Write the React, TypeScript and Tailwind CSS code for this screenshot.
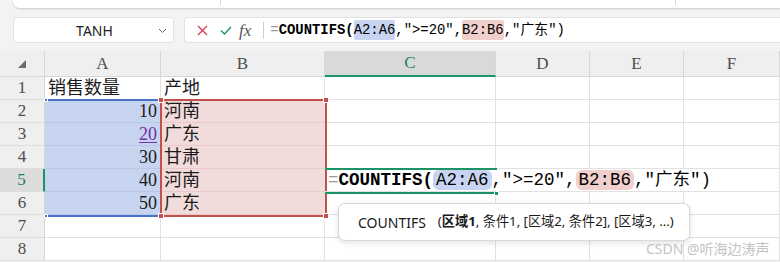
import React from 'react';

const cols = [
    { key: 'A', w: 'w-[116px]' },
    { key: 'B', w: 'w-[164px]' },
    { key: 'C', w: 'w-[171px]' },
    { key: 'D', w: 'w-[94px]' },
    { key: 'E', w: 'w-[94px]' },
    { key: 'F', w: 'w-[96px]' },
];

const rows: Record<number, { a?: string; b?: string }> = {
    1: { a: '销售数量', b: '产地' },
    2: { a: '10', b: '河南' },
    3: { a: '20', b: '广东' },
    4: { a: '30', b: '甘肃' },
    5: { a: '40', b: '河南' },
    6: { a: '50', b: '广东' },
    7: {},
    8: {},
};

const serif = "font-['Liberation_Serif','Noto_Sans_CJK_SC',serif]";
const mono = "font-['Liberation_Mono','Noto_Sans_CJK_SC',monospace]";

function Formula({ big }: { big?: boolean }) {
    const hl = big ? 'px-[3px] rounded-md' : 'py-[2px] rounded-[2px]';
    return (
        <span className={`${mono} whitespace-nowrap text-black`}>
            <span className="text-[#9a9a9a]">=</span>
            <span className="font-bold">COUNTIFS(</span>
            <span className={`bg-[#c8d4f1] ${hl}`}>A2:A6</span>
            ,"&gt;=20",
            <span className={`bg-[#f0cfcd] ${hl}`}>B2:B6</span>
            ,"广东")
        </span>
    );
}

function Cell({ col, row }: { col: string; row: number }) {
    const r = rows[row];
    const base = 'h-[23px] border-b border-[#e1e1e1] flex items-center';
    if (col === 'A') {
        const inRange = row >= 2 && row <= 6;
        return (
            <div className={`${base} border-r ${inRange ? 'bg-[#c7d4f0] border-b-[#b9c7e6] justify-end pr-[3px]' : 'pl-[3px]'}`}>
                {r.a && (
                    <span className={`${serif} text-[18px] leading-none ${row === 3 ? 'text-[#7030a0] underline underline-offset-2' : 'text-[#1a1a1a]'}`}>
                        {r.a}
                    </span>
                )}
            </div>
        );
    }
    if (col === 'B') {
        const inRange = row >= 2 && row <= 6;
        return (
            <div className={`${base} border-r pl-[3px] ${inRange ? 'bg-[#f2dcdb] border-b-[#e8caca]' : ''}`}>
                {r.b && <span className={`${serif} text-[18px] leading-none text-[#1a1a1a]`}>{r.b}</span>}
            </div>
        );
    }
    if (row === 5) {
        if (col === 'C') {
            return (
                <div className={`${base} relative z-10 pl-[3px] text-[17.5px]`}>
                    <Formula big />
                </div>
            );
        }
        if (col === 'D' || col === 'E') return <div className={base} />;
    }
    return <div className={`${base} border-r`} />;
}

export default function App() {
    return (
        <div className="w-[780px] h-[262px] overflow-hidden bg-[#f3f3f3] flex flex-col">
            {/* ribbon edge */}
            <div className="ml-[13px] h-[8px] bg-white rounded-bl-md shadow-[0_1px_2px_rgba(0,0,0,0.18)] flex">
                <div className="w-[208px] border-r border-[#d8d8d8] h-[5px]" />
                <div className="w-[455px] border-r border-[#d8d8d8] h-[5px]" />
            </div>

            {/* name box + formula bar */}
            <div className="mt-[9px] flex gap-[10px] pl-[13px] h-[26px]">
                <div className="w-[161px] bg-white rounded-[4px] border border-[#e2e2e2] flex items-center relative">
                    <span className="flex-1 text-center font-['Noto_Sans',sans-serif] text-[14px] text-[#222] pl-[2px]">TANH</span>
                    <svg className="absolute right-[6px] top-[10px]" width="9" height="6" viewBox="0 0 9 6">
                        <path d="M1 1l3.5 3.5L8 1" stroke="#666" strokeWidth="1" fill="none" />
                    </svg>
                </div>
                <div className="flex-1 bg-white rounded-l-[4px] border border-r-0 border-[#e2e2e2] flex items-center">
                    <svg className="ml-[12px]" width="11" height="11" viewBox="0 0 11 11">
                        <path d="M1 1l9 9M10 1l-9 9" stroke="#d8374e" strokeWidth="1.3" />
                    </svg>
                    <svg className="ml-[12px]" width="12" height="9" viewBox="0 0 12 9">
                        <path d="M1 4.5l3.5 3.5L11 1" stroke="#1f9468" strokeWidth="1.4" fill="none" />
                    </svg>
                    <span className={`ml-[7px] ${serif} italic text-[17px] text-[#555] leading-none`}>fx</span>
                    <div className="ml-[12px] w-px h-[17px] bg-[#cfcfcf]" />
                    <div className="ml-[6px] text-[13.9px] leading-none">
                        <Formula />
                    </div>
                </div>
            </div>

            {/* sheet */}
            <div className="mt-[8px] relative">
                <div className="grid grid-cols-[45px_116px_164px_171px_94px_94px_96px] bg-white">
                    {/* header row */}
                    <div className="h-[26px] bg-[#efefef] border-r border-b border-[#d6d6d6] flex items-center justify-center">
                        <svg width="9" height="9" viewBox="0 0 9 9" className="mt-[2px]">
                            <path d="M8 0v8H0z" fill="#6b6b6b" />
                        </svg>
                    </div>
                    {cols.map(c => (
                        <div
                            key={c.key}
                            className={`h-[26px] border-r border-[#d6d6d6] flex items-center justify-center ${serif} text-[17px] ${
                                c.key === 'C'
                                    ? 'bg-[#d9d9d9] border-b-2 border-b-[#1a9466] text-[#1a7f6e]'
                                    : 'bg-[#efefef] border-b text-[#4d4d4d]'
                            }`}
                        >
                            {c.key}
                        </div>
                    ))}
                    {[1, 2, 3, 4, 5, 6, 7, 8].map(row => (
                        <React.Fragment key={row}>
                            <div
                                className={`h-[23px] border-b border-[#dedede] flex items-center justify-center ${serif} text-[17px] ${
                                    row === 5
                                        ? 'bg-[#dcdcdc] text-[#1a7f6e] border-r-2 border-r-[#1a9466]'
                                        : 'bg-[#efefef] text-[#4d4d4d] border-r border-r-[#d6d6d6]'
                                }`}
                            >
                                {row}
                            </div>
                            {cols.map(c => (
                                <Cell key={c.key} col={c.key} row={row} />
                            ))}
                        </React.Fragment>
                    ))}
                </div>

                {/* blue range A2:A6 */}
                <div className="absolute left-[46px] top-[48px] w-[113px] h-[2px] bg-[#4a72c6]" />
                <div className="absolute left-[46px] top-[164px] w-[113px] h-[2px] bg-[#4a72c6]" />
                <div className="absolute left-[44px] top-[47px] w-[4px] h-[4px] bg-[#4a72c6] border border-white" />
                <div className="absolute left-[44px] top-[163px] w-[4px] h-[4px] bg-[#4a72c6] border border-white" />

                {/* red range B2:B6 */}
                <div className="absolute left-[160px] top-[48px] w-[167px] h-[118px] border-2 border-[#c4504c]" />
                <div className="absolute left-[158px] top-[46px] w-[6px] h-[6px] bg-[#c4504c] border border-white" />
                <div className="absolute left-[323px] top-[46px] w-[6px] h-[6px] bg-[#c4504c] border border-white" />
                <div className="absolute left-[158px] top-[162px] w-[6px] h-[6px] bg-[#c4504c] border border-white" />
                <div className="absolute left-[323px] top-[162px] w-[6px] h-[6px] bg-[#c4504c] border border-white" />

                {/* active cell C5 */}
                <div className="absolute left-[325px] top-[117px] w-[172px] h-[2px] bg-[#1a9466]" />
                <div className="absolute left-[325px] top-[141px] w-[172px] h-[2px] bg-[#1a9466]" />
                <div className="absolute left-[494px] top-[140px] w-[5px] h-[5px] bg-[#1a9466] border border-white" />

                {/* function tooltip */}
                <div className="absolute left-[338px] top-[152px] w-[352px] h-[38px] bg-white rounded-[7px] border border-[#d9d9d9] shadow-[0_2px_6px_rgba(0,0,0,0.12)] flex items-center pl-[19px] font-['Noto_Sans','Noto_Sans_CJK_SC',sans-serif] text-[13.2px] text-[#1a1a1a] whitespace-nowrap">
                    <span className="text-[14px]">COUNTIFS</span>
                    <span className="ml-[12px]">
                        (<span className="font-bold">区域1</span>, 条件1, [区域2, 条件2], [区域3, ...)
                    </span>
                </div>

                {/* watermark */}
                <div className="absolute left-[646px] top-[187px] font-['Noto_Sans','Noto_Sans_CJK_SC',sans-serif] text-[14px] text-[#c4c4c4] whitespace-nowrap">
                    CSDN @听海边涛声
                </div>
            </div>
        </div>
    );
}
